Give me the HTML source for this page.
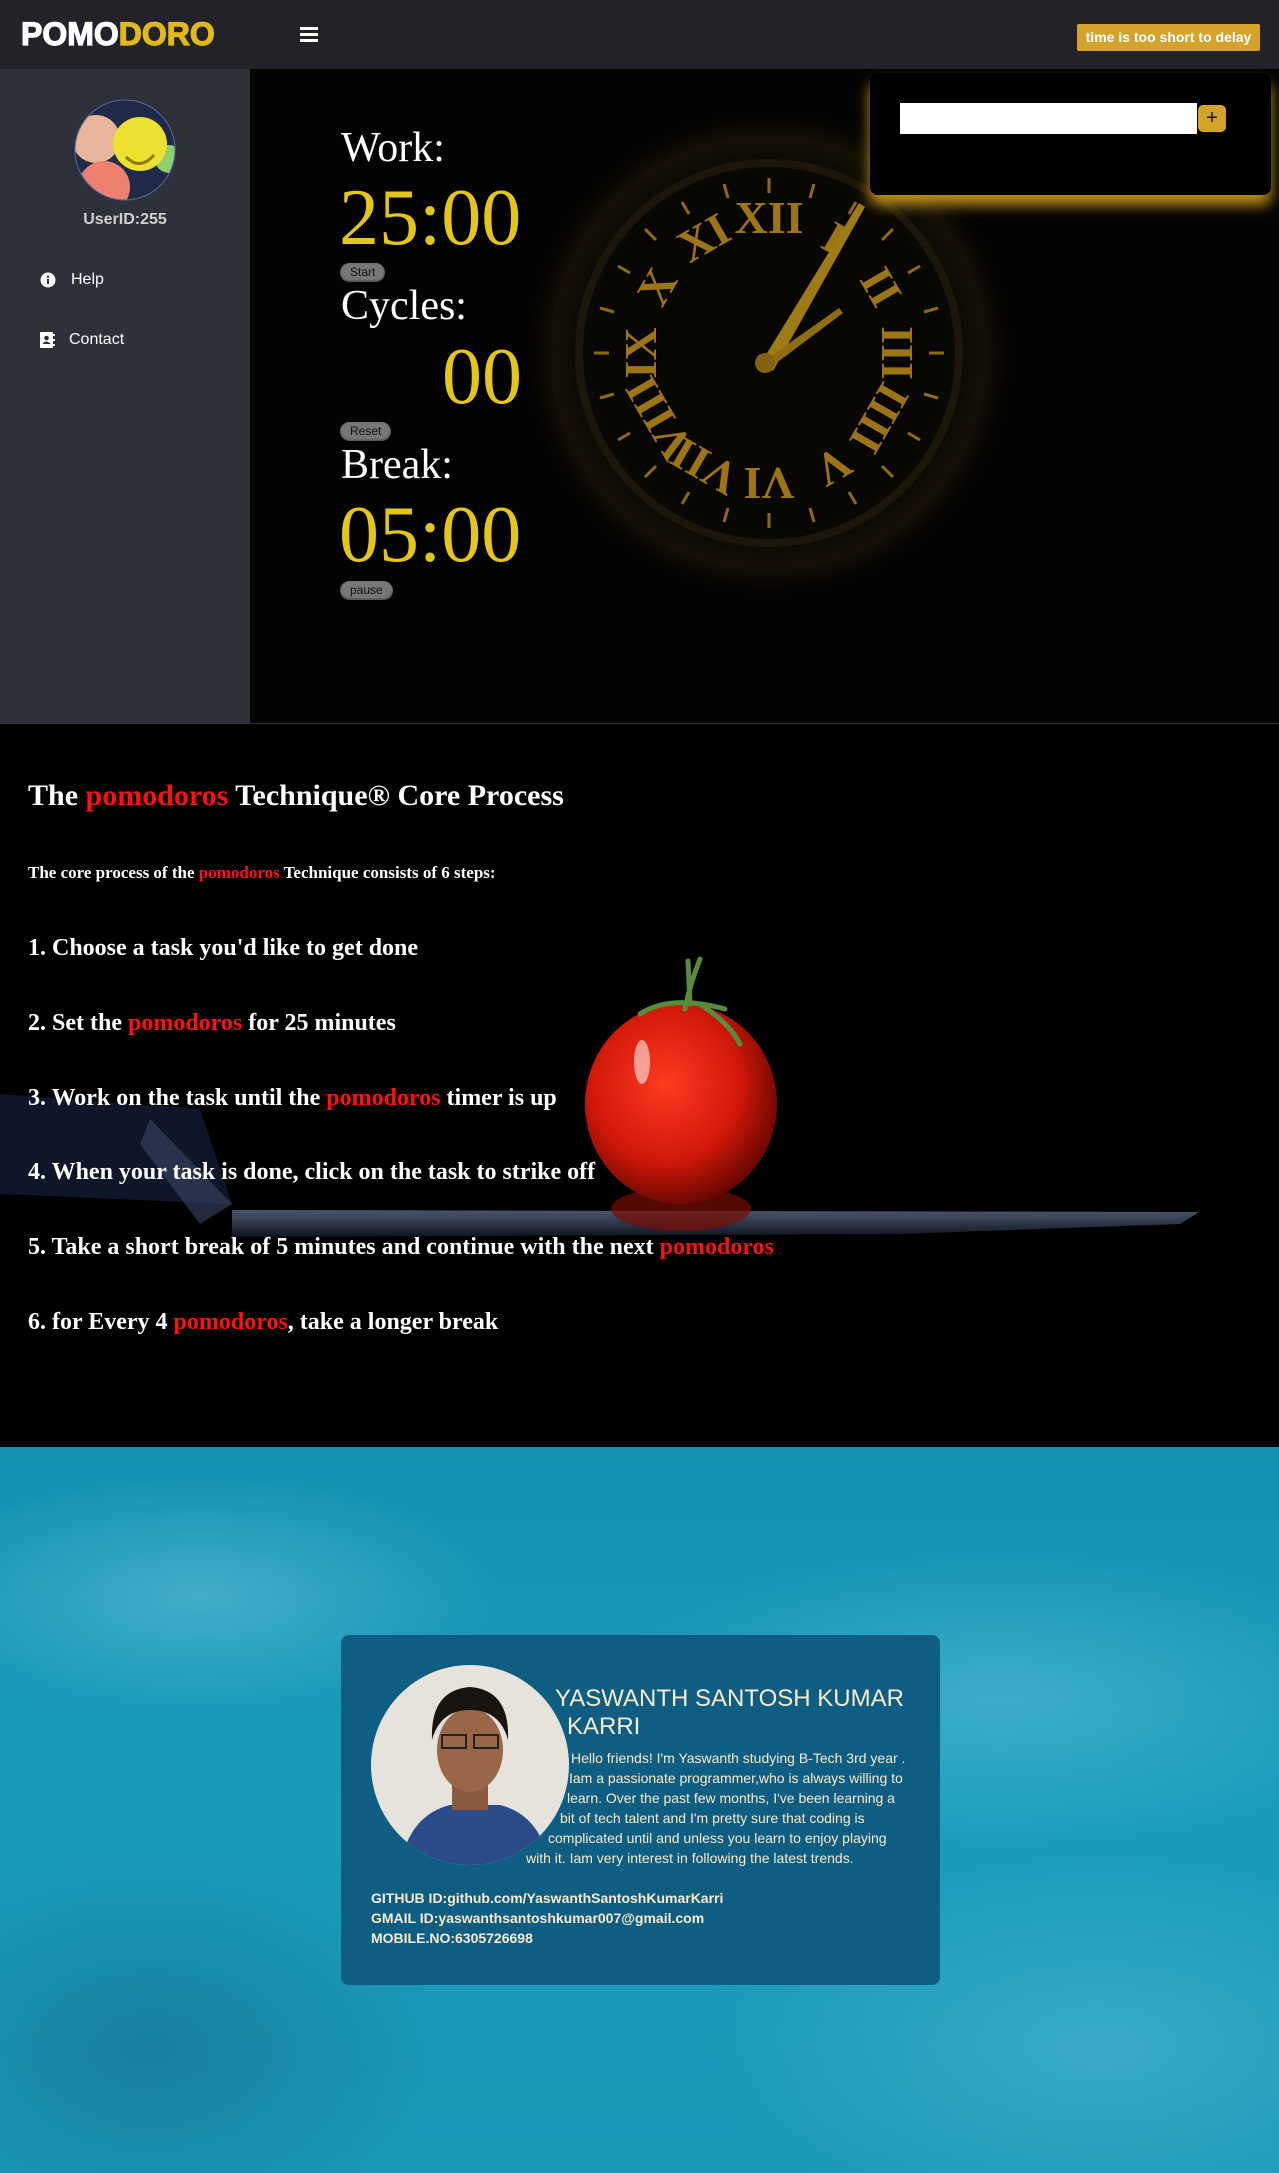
<!DOCTYPE html>
<html><head><meta charset="utf-8">
<style>
*{margin:0;padding:0;box-sizing:border-box}
body{width:1279px;height:2173px;background:#000;font-family:"Liberation Sans",sans-serif;position:relative;overflow:hidden}
.abs{position:absolute}
header{position:absolute;left:0;top:0;width:1279px;height:69px;background:#222328}
.logo{position:absolute;left:21px;top:16px;font:900 32px "Liberation Sans",sans-serif;color:#fff;-webkit-text-stroke:1.2px #fff}
.logo span{color:#e2b91c;-webkit-text-stroke:1.2px #e2b91c}
.badge{position:absolute;left:1077px;top:24px;width:183px;height:27px;background:#d4a32a;color:#fff;font:bold 14px "Liberation Sans",sans-serif;line-height:27px;text-align:center;border-radius:2px}
.side{position:absolute;left:0;top:69px;width:250px;height:654px;background:#2e303a}
.hero{position:absolute;left:250px;top:69px;width:1029px;height:654px;background:#030303;overflow:hidden}
.lbl{position:absolute;left:341px;color:#fff;font-size:42px;font-family:"Liberation Serif",serif;line-height:1}
.num{position:absolute;left:339px;color:#e3c51b;font-size:80px;font-family:"Liberation Serif",serif;line-height:1}
.btn{position:absolute;left:340px;height:19px;background:#777;border-radius:10px;color:#111;font-size:12px;line-height:19px;padding:0 10px;box-shadow:inset 0 -1px 2px #444}
.sec2{position:absolute;left:0;top:723px;width:1279px;height:724px;background:#000;overflow:hidden;border-top:1px solid #333}
.sec2 .t{position:absolute;left:28px;color:#fff;font-family:"Liberation Serif",serif;font-weight:bold;white-space:nowrap}
.r{color:#ff1010}
.sec3{position:absolute;left:0;top:1447px;width:1279px;height:726px;overflow:hidden;
background:
radial-gradient(ellipse 300px 120px at 200px 150px,rgba(140,220,235,.35),transparent),
radial-gradient(ellipse 400px 150px at 1000px 250px,rgba(140,220,235,.3),transparent),
radial-gradient(ellipse 300px 200px at 150px 600px,rgba(10,80,110,.35),transparent),
radial-gradient(ellipse 400px 200px at 1100px 600px,rgba(140,220,235,.25),transparent),
linear-gradient(180deg,#1591b2 0%,#1a9cbd 50%,#1b98b8 100%)}
.card{position:absolute;left:341px;top:1635px;width:599px;height:350px;background:#0e5d82;border-radius:8px}
.ct{position:absolute;color:#f7ecd0;white-space:nowrap;font-size:14px}
</style></head><body>
<header>
<div class="logo">POMO<span>DORO</span></div>
<div class="abs" style="left:300px;top:27px;width:18px;height:3px;background:#fff;box-shadow:0 6px 0 #fff,0 12px 0 #fff"></div>
<div class="badge">time is too short to delay</div>
</header>

<div class="side">
<svg class="abs" style="left:74px;top:30px" width="102" height="102" viewBox="0 0 102 102">
<defs><clipPath id="c"><circle cx="51" cy="51" r="50"/></clipPath></defs>
<g clip-path="url(#c)">
<rect width="102" height="102" fill="#1e2a48"/>
<circle cx="22" cy="40" r="24" fill="#e8b49a"/>
<circle cx="30" cy="88" r="26" fill="#ee8070"/>
<circle cx="95" cy="60" r="14" fill="#8fcf70"/>
<circle cx="66" cy="45" r="27" fill="#ece030"/>
<path d="M52 58 Q66 72 80 56" stroke="#8a7a10" stroke-width="3" fill="none"/>
</g>
<circle cx="51" cy="51" r="50" fill="none" stroke="#5a6aa0" stroke-width="1"/>
</svg>
<div class="abs" style="left:0;width:250px;top:142px;text-align:center;color:#d0d0d0;font:bold 16px 'Liberation Sans',sans-serif">UserID:255</div>
<svg class="abs" style="left:40px;top:203px" width="16" height="16" viewBox="0 0 16 16"><circle cx="8" cy="8" r="7.5" fill="#fff"/><rect x="7" y="7" width="2" height="5" fill="#2e303a"/><circle cx="8" cy="4.7" r="1.2" fill="#2e303a"/></svg>
<div class="abs" style="left:71px;top:202px;color:#fff;font-size:16px">Help</div>
<svg class="abs" style="left:40px;top:263px" width="15" height="16" viewBox="0 0 15 16"><rect x="0" y="0" width="13" height="16" rx="1" fill="#fff"/><rect x="13" y="2" width="2" height="2" fill="#fff"/><rect x="13" y="7" width="2" height="2" fill="#fff"/><rect x="13" y="12" width="2" height="2" fill="#fff"/><circle cx="6.5" cy="6" r="2.3" fill="#2e303a"/><path d="M2.5 12 Q6.5 7 10.5 12Z" fill="#2e303a"/></svg>
<div class="abs" style="left:69px;top:262px;color:#fff;font-size:16px">Contact</div>
</div>

<div class="hero">
<svg class="abs" style="left:259px;top:24px;opacity:.85" width="520" height="520" viewBox="-260 -260 520 520">
<defs><radialGradient id="cg"><stop offset="0.7" stop-color="#0a0804"/><stop offset="0.85" stop-color="#181208"/><stop offset="1" stop-color="#000" stop-opacity="0"/></radialGradient></defs>
<circle r="255" fill="url(#cg)"/>
<circle r="190" fill="none" stroke="#221a0c" stroke-width="8"/>
<g fill="#b8881a" font-family="Liberation Serif,serif" font-size="46" text-anchor="middle" font-weight="bold">
<text x="0" y="-120">XII</text><text x="65" y="-100" transform="rotate(30 65 -115)">I</text>
<text x="110" y="-52" transform="rotate(60 110 -65)">II</text><text x="128" y="15" transform="rotate(90 128 0)">III</text>
<text x="110" y="80" transform="rotate(120 110 65)">IIII</text><text x="64" y="128" transform="rotate(150 64 113)">V</text>
<text x="0" y="145" transform="rotate(180 0 130)">VI</text><text x="-64" y="128" transform="rotate(210 -64 113)">VII</text>
<text x="-110" y="80" transform="rotate(240 -110 65)">VIII</text><text x="-128" y="15" transform="rotate(270 -128 0)">IX</text>
<text x="-110" y="-52" transform="rotate(300 -110 -65)">X</text><text x="-65" y="-100" transform="rotate(330 -65 -115)">XI</text>
</g>
<g stroke="#a87c18" stroke-width="3">
<line x1="0" y1="-175" x2="0" y2="-160"/><line x1="0" y1="175" x2="0" y2="160"/><line x1="175" y1="0" x2="160" y2="0"/><line x1="-175" y1="0" x2="-160" y2="0"/>
<line x1="87" y1="-151" x2="80" y2="-139"/><line x1="151" y1="-87" x2="139" y2="-80"/><line x1="151" y1="87" x2="139" y2="80"/><line x1="87" y1="151" x2="80" y2="139"/>
<line x1="-87" y1="151" x2="-80" y2="139"/><line x1="-151" y1="87" x2="-139" y2="80"/><line x1="-151" y1="-87" x2="-139" y2="-80"/><line x1="-87" y1="-151" x2="-80" y2="-139"/>
<line x1="45" y1="-169" x2="41" y2="-155"/><line x1="124" y1="-124" x2="113" y2="-113"/><line x1="169" y1="-45" x2="155" y2="-41"/><line x1="169" y1="45" x2="155" y2="41"/>
<line x1="124" y1="124" x2="113" y2="113"/><line x1="45" y1="169" x2="41" y2="155"/><line x1="-45" y1="169" x2="-41" y2="155"/><line x1="-124" y1="124" x2="-113" y2="113"/>
<line x1="-169" y1="45" x2="-155" y2="41"/><line x1="-169" y1="-45" x2="-155" y2="-41"/><line x1="-124" y1="-124" x2="-113" y2="-113"/><line x1="-45" y1="-169" x2="-41" y2="-155"/>
</g>
<path d="M-8 10 L90 -150 L96 -146 L4 18Z" fill="#b8901e"/>
<path d="M-5 8 L70 -45 L74 -40 L2 14Z" fill="#a88018"/>
<circle cx="-4" cy="10" r="10" fill="#9a7414"/>
</svg>
<div class="abs" style="left:620px;top:4px;width:401px;height:122px;background:#000;border-radius:8px;box-shadow:0 10px 14px rgba(212,160,30,.9)"></div>
<div class="abs" style="left:650px;top:34px;width:297px;height:31px;background:#fff"></div>
<div class="abs" style="left:948px;top:36px;width:28px;height:27px;background:#d4a32a;border-radius:5px;color:#111;font-size:20px;line-height:26px;text-align:center">+</div>
</div>

<div class="lbl" style="top:127px">Work:</div>
<div class="num" style="top:178px">25:00</div>
<div class="btn" style="top:263px">Start</div>
<div class="lbl" style="top:285px">Cycles:</div>
<div class="num" style="top:337px;left:442px">00</div>
<div class="btn" style="top:422px">Reset</div>
<div class="lbl" style="top:444px">Break:</div>
<div class="num" style="top:495px">05:00</div>
<div class="btn" style="top:581px">pause</div>

<div class="sec2">
<svg class="abs" style="left:0;top:0" width="1279" height="724">
<defs>
<radialGradient id="tm" cx="0.42" cy="0.4" r="0.65"><stop offset="0" stop-color="#ff3a20"/><stop offset="0.6" stop-color="#d01808"/><stop offset="1" stop-color="#5a0500"/></radialGradient>
<linearGradient id="kn" x1="0" y1="0" x2="0" y2="1"><stop offset="0" stop-color="#4a5670"/><stop offset="1" stop-color="#10141e"/></linearGradient>
</defs>
<path d="M0 370 L200 385 L232 480 L0 470Z" fill="#10162a"/>
<path d="M150 395 L232 480 L200 500 L140 420Z" fill="#3a4666" opacity=".6"/>
<path d="M232 486 L1199 488 L1180 500 L900 510 L232 513Z" fill="url(#kn)"/>
<ellipse cx="681" cy="485" rx="70" ry="22" fill="#7a0c04" opacity=".7"/>
<ellipse cx="681" cy="380" rx="96" ry="100" fill="url(#tm)"/>
<ellipse cx="642" cy="338" rx="8" ry="22" fill="#fff" opacity=".55"/>
<path d="M685 285 Q690 260 700 235 M690 280 L688 237 M640 290 Q670 270 725 285 M700 280 Q730 300 740 320" stroke="#5a8a3a" stroke-width="5" fill="none" stroke-linecap="round"/>
</svg>
<div class="t" style="top:55px;font-size:30px">The <span class="r">pomodoros</span> Technique® Core Process</div>
<div class="t" style="top:139px;font-size:17px">The core process of the <span class="r">pomodoros</span> Technique consists of 6 steps:</div>
<div class="t" style="top:211px;font-size:24px">1. Choose a task you'd like to get done</div>
<div class="t" style="top:286px;font-size:24px">2. Set the <span class="r">pomodoros</span> for 25 minutes</div>
<div class="t" style="top:361px;font-size:24px">3. Work on the task until the <span class="r">pomodoros</span> timer is up</div>
<div class="t" style="top:435px;font-size:24px">4. When your task is done, click on the task to strike off</div>
<div class="t" style="top:510px;font-size:24px">5. Take a short break of 5 minutes and continue with the next <span class="r">pomodoros</span></div>
<div class="t" style="top:585px;font-size:24px">6. for Every 4 <span class="r">pomodoros</span>, take a longer break</div>
</div>

<div class="sec3"></div>
<div class="card"></div>
<svg class="abs" style="left:370px;top:1665px" width="200" height="200" viewBox="0 0 200 200">
<defs><clipPath id="p"><ellipse cx="100" cy="100" rx="99" ry="100"/></clipPath></defs>
<g clip-path="url(#p)">
<rect width="200" height="200" fill="#e6e2dc"/>
<path d="M30 200 Q40 150 80 140 L130 140 Q170 150 180 200Z" fill="#2a4a8a"/>
<rect x="82" y="110" width="36" height="35" fill="#8a5a40"/>
<ellipse cx="100" cy="85" rx="33" ry="42" fill="#9a6648"/>
<path d="M62 75 Q60 25 100 22 Q140 25 138 75 Q130 45 100 45 Q70 45 62 75Z" fill="#1a1410"/>
<rect x="72" y="70" width="24" height="13" fill="none" stroke="#222" stroke-width="2"/>
<rect x="104" y="70" width="24" height="13" fill="none" stroke="#222" stroke-width="2"/>
</g>
</svg>
<div class="ct" style="left:555px;top:1685px;font-size:24px;line-height:28px">YASWANTH SANTOSH KUMAR</div>
<div class="ct" style="left:567px;top:1713px;font-size:24px;line-height:28px">KARRI</div>
<div class="ct" style="left:571px;top:1748px;line-height:20px">Hello friends! I'm Yaswanth studying B-Tech 3rd year .</div>
<div class="ct" style="left:569px;top:1768px;line-height:20px">Iam a passionate programmer,who is always willing to</div>
<div class="ct" style="left:567px;top:1788px;line-height:20px">learn. Over the past few months, I've been learning a</div>
<div class="ct" style="left:560px;top:1808px;line-height:20px">bit of tech talent and I'm pretty sure that coding is</div>
<div class="ct" style="left:548px;top:1828px;line-height:20px">complicated until and unless you learn to enjoy playing</div>
<div class="ct" style="left:526px;top:1848px;line-height:20px">with it. Iam very interest in following the latest trends.</div>
<div class="ct" style="left:371px;top:1888px;line-height:20px;font-weight:bold">GITHUB ID:github.com/YaswanthSantoshKumarKarri</div>
<div class="ct" style="left:371px;top:1908px;line-height:20px;font-weight:bold">GMAIL ID:yaswanthsantoshkumar007@gmail.com</div>
<div class="ct" style="left:371px;top:1928px;line-height:20px;font-weight:bold">MOBILE.NO:6305726698</div>
</body></html>
